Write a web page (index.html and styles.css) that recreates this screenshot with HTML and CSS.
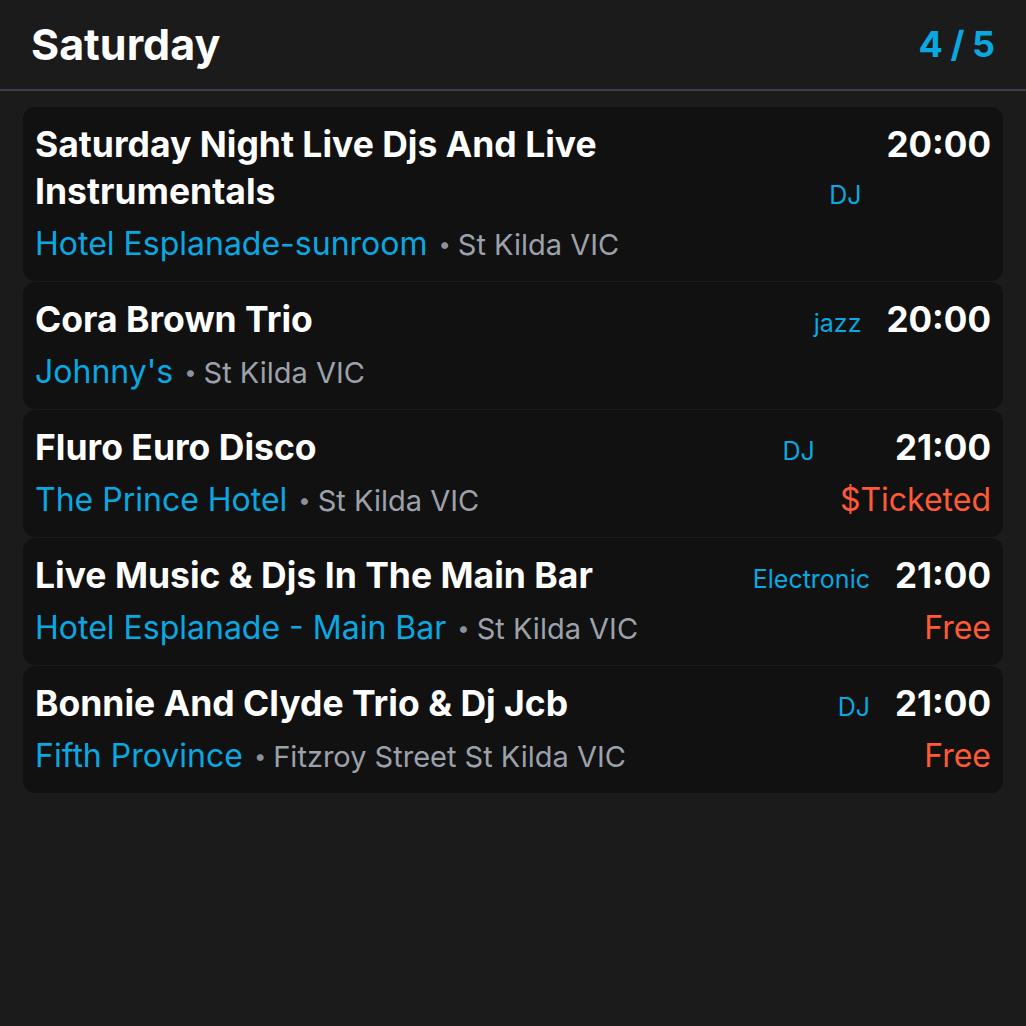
FILE: index.html
```html
<!DOCTYPE html>
<html lang="en">
<head>
<meta charset="utf-8">
<title>Saturday</title>
<link rel="stylesheet" href="styles.css">
</head>
<body>
<header class="day-header">
  <h1 class="day-title">Saturday</h1>
  <div class="day-count">4 / 5</div>
</header>
<main class="event-list">
  <article class="event">
    <div class="event-head">
      <h2 class="event-title">Saturday Night Live Djs And Live Instrumentals</h2>
      <span class="event-tag">DJ</span>
    </div>
    <div class="event-time">20:00</div>
    <div class="event-place"><span class="venue">Hotel Esplanade-sunroom</span><span class="dot">•</span><span class="locality">St Kilda VIC</span></div>
    <div class="event-price"></div>
  </article>
  <article class="event">
    <div class="event-head">
      <h2 class="event-title">Cora Brown Trio</h2>
      <span class="event-tag">jazz</span>
    </div>
    <div class="event-time">20:00</div>
    <div class="event-place"><span class="venue">Johnny's</span><span class="dot">•</span><span class="locality">St Kilda VIC</span></div>
    <div class="event-price"></div>
  </article>
  <article class="event">
    <div class="event-head">
      <h2 class="event-title">Fluro Euro Disco</h2>
      <span class="event-tag">DJ</span>
    </div>
    <div class="event-time">21:00</div>
    <div class="event-place"><span class="venue">The Prince Hotel</span><span class="dot">•</span><span class="locality">St Kilda VIC</span></div>
    <div class="event-price">$Ticketed</div>
  </article>
  <article class="event">
    <div class="event-head">
      <h2 class="event-title">Live Music &amp; Djs In The Main Bar</h2>
      <span class="event-tag">Electronic</span>
    </div>
    <div class="event-time">21:00</div>
    <div class="event-place"><span class="venue">Hotel Esplanade - Main Bar</span><span class="dot">•</span><span class="locality">St Kilda VIC</span></div>
    <div class="event-price">Free</div>
  </article>
  <article class="event">
    <div class="event-head">
      <h2 class="event-title">Bonnie And Clyde Trio &amp; Dj Jcb</h2>
      <span class="event-tag">DJ</span>
    </div>
    <div class="event-time">21:00</div>
    <div class="event-place"><span class="venue">Fifth Province</span><span class="dot">•</span><span class="locality">Fitzroy Street St Kilda VIC</span></div>
    <div class="event-price">Free</div>
  </article>
</main>
</body>
</html>
```

FILE: styles.css
```css
* { box-sizing: border-box; }

html, body {
  margin: 0;
  padding: 0;
  background: #1b1b1b;
  height: 100%;
}

body {
  font-family: Inter, "Noto Sans", "Liberation Sans", sans-serif;
  color: #ffffff;
}

.day-header {
  height: 91px;
  display: flex;
  align-items: center;
  justify-content: space-between;
  padding: 0 31px 2px 31px;
  border-bottom: 2px solid #3a404c;
}

.day-title {
  margin: 0;
  font-size: 43px;
  font-weight: 700;
  color: #ffffff;
}

.day-count {
  font-size: 36px;
  font-weight: 700;
  color: #0aa8e0;
  word-spacing: -1px;
}

.event-list {
  padding: 16px 23px;
  display: flex;
  flex-direction: column;
  gap: 1px;
}

.event {
  background: #111111;
  border-radius: 12px;
  padding: 14px 12px 16px 12px;
  display: grid;
  grid-template-columns: 1fr auto;
  column-gap: 25px;
  row-gap: 9px;
  align-items: start;
}

.event-head {
  display: flex;
  align-items: last baseline;
  justify-content: space-between;
  gap: 20px;
}

.event-title {
  margin: 0;
  font-size: 35.5px;
  line-height: 47px;
  font-weight: 700;
  max-width: 600px;
}

.event-tag {
  font-size: 25px;
  color: #0aa8e0;
  white-space: nowrap;
}

.event-time {
  font-size: 35px;
  line-height: 47px;
  font-weight: 700;
  text-align: right;
  justify-self: end;
}

.event-place {
  font-size: 32px;
  line-height: 40px;
  white-space: nowrap;
}

.venue { color: #0aa8e0; }

.dot {
  color: #8b919c;
  font-size: 22px;
  margin: 0 7px 0 11px;
  vertical-align: 3px;
}

.locality {
  color: #9ca1ab;
  font-size: 29px;
}

.event-price {
  font-size: 32px;
  line-height: 40px;
  color: #ff5a36;
  text-align: right;
  justify-self: end;
}
```
